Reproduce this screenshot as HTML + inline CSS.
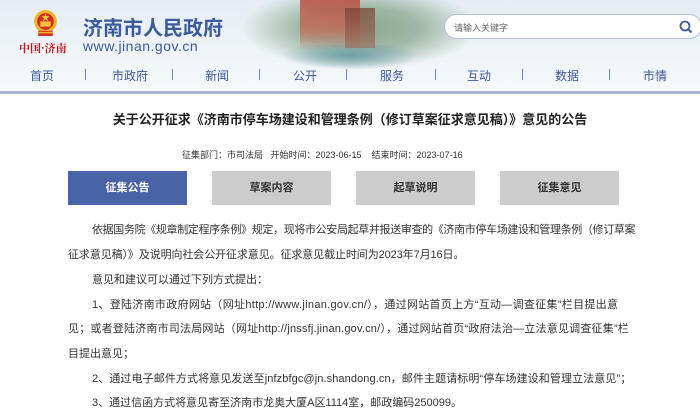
<!DOCTYPE html>
<html><head><meta charset="utf-8">
<style>
*{margin:0;padding:0;box-sizing:border-box}
body{width:700px;height:415px;overflow:hidden;background:#fff;font-family:"Liberation Sans","Noto Sans CJK SC",sans-serif;color:#333;position:relative}
.hdr{position:absolute;left:0;top:0;width:700px;height:91px;background:linear-gradient(180deg,#e4edf3 0%,#eef3f6 50%,#f7f9fb 100%)}
.scene{position:absolute;left:240px;top:0;width:240px;height:70px;background:radial-gradient(ellipse at 50% 40%,#8aa78f 0%,#9fb8a6 35%,rgba(220,230,235,0) 70%)}
.pav{position:absolute;left:300px;top:0;width:60px;height:50px;background:linear-gradient(180deg,#b84a3a,#c46a55 60%,rgba(200,200,200,0));opacity:.8}
.pav2{position:absolute;left:345px;top:8px;width:30px;height:40px;background:linear-gradient(180deg,#7a3d30,#9c7060);opacity:.7}
.water{position:absolute;left:280px;top:45px;width:140px;height:25px;background:radial-gradient(ellipse at 50% 40%,#6f9fa8,rgba(230,238,242,0) 70%)}
.title{position:absolute;left:83px;top:12px;font-size:20px;font-weight:bold;color:#3c5a9c;letter-spacing:0}
.url{position:absolute;left:83px;top:38px;font-size:14px;color:#3c5a9c;letter-spacing:.5px}
.cn{position:absolute;left:19px;top:40px;font-size:11px;color:#c3141b;font-weight:bold;font-family:"Noto Serif CJK SC",serif}
.search{position:absolute;left:444px;top:14px;width:258px;height:25px;border:1px solid #b6c0dc;border-radius:13px;background:#fff}
.search span{position:absolute;left:9px;top:6px;font-size:9px;color:#666}
.nav{position:absolute;top:67px;left:0;width:700px;font-size:12px;color:#3c5a9c}
.nav span{position:absolute;top:0}
.nav i{position:absolute;top:2px;width:1px;height:11px;background:#6f86bd}
.bar{position:absolute;left:0;top:91px;width:700px;height:3px;background:#a9b5d8}
.h1{position:absolute;left:0;width:700px;top:109px;text-align:center;font-size:13px;font-weight:bold;color:#222}
.meta{position:absolute;left:182px;top:148px;font-size:9px;color:#333;white-space:nowrap}
.tab{position:absolute;top:171px;width:119px;height:34px;background:#cccccc;text-align:center;line-height:34px;font-size:11px;font-weight:bold;color:#333}
.tab.on{background:#4863a6;color:#fff}
.p{position:absolute;left:68px;font-size:11px;color:#333;white-space:nowrap}
</style></head><body>
<div class="hdr"></div>
<div class="scene"></div><div class="water"></div><div class="pav"></div><div class="pav2"></div>
<svg style="position:absolute;left:32px;top:9px" width="27" height="28" viewBox="0 0 26 27">
<circle cx="13" cy="12" r="11" fill="#e9b52c"/><circle cx="13" cy="12" r="8" fill="#d42a1e"/>
<rect x="8" y="12" width="10" height="5" fill="#f2c43a"/><polygon points="13,4 14,7 17,7 14.5,9 15.5,12 13,10 10.5,12 11.5,9 9,7 12,7" fill="#f5d03c"/>
<rect x="6" y="21" width="14" height="5" fill="#d42a1e"/><rect x="6" y="22" width="14" height="1.5" fill="#e9b52c"/></svg>
<div class="cn">中国·济南</div>
<div class="title">济南市人民政府</div>
<div class="url">www.jinan.gov.cn</div>
<div class="search"><span>请输入关键字</span>
<svg style="position:absolute;right:8px;top:5px" width="14" height="14" viewBox="0 0 14 14"><circle cx="6" cy="6" r="4.5" fill="none" stroke="#3c5a9c" stroke-width="1.8"/><line x1="9.3" y1="9.3" x2="12.5" y2="12.5" stroke="#3c5a9c" stroke-width="2"/></svg></div>
<div class="nav">
<span style="left:30px">首页</span><i style="left:85px"></i>
<span style="left:112px">市政府</span><i style="left:172px"></i>
<span style="left:205px">新闻</span><i style="left:259px"></i>
<span style="left:293px">公开</span><i style="left:346px"></i>
<span style="left:380px">服务</span><i style="left:435px"></i>
<span style="left:467px">互动</span><i style="left:522px"></i>
<span style="left:555px">数据</span><i style="left:609px"></i>
<span style="left:643px">市情</span>
</div>
<div class="bar"></div>
<div class="h1">关于公开征求《济南市停车场建设和管理条例（修订草案征求意见稿）》意见的公告</div>
<div class="meta">征集部门：市司法局&nbsp;&nbsp;&nbsp;开始时间：2023-06-15&nbsp;&nbsp;&nbsp;&nbsp;结束时间：2023-07-16</div>
<div class="tab on" style="left:68px">征集公告</div>
<div class="tab" style="left:212px">草案内容</div>
<div class="tab" style="left:356px">起草说明</div>
<div class="tab" style="left:500px">征集意见</div>
<div class="p" style="top:221px;left:92px;letter-spacing:-.35px">依据国务院《规章制定程序条例》规定，现将市公安局起草并报送审查的《济南市停车场建设和管理条例（修订草案</div>
<div class="p" style="top:246px;letter-spacing:-.1px">征求意见稿）》及说明向社会公开征求意见。征求意见截止时间为2023年7月16日。</div>
<div class="p" style="top:271px;left:92px">意见和建议可以通过下列方式提出：</div>
<div class="p" style="top:296px;left:92px;letter-spacing:.3px">1、登陆济南市政府网站（网址http://www.jinan.gov.cn/），通过网站首页上方“互动—调查征集”栏目提出意</div>
<div class="p" style="top:320px;letter-spacing:.2px">见；或者登陆济南市司法局网站（网址http://jnssfj.jinan.gov.cn/），通过网站首页“政府法治—立法意见调查征集”栏</div>
<div class="p" style="top:345px">目提出意见；</div>
<div class="p" style="top:370px;left:92px;letter-spacing:.1px">2、通过电子邮件方式将意见发送至jnfzbfgc@jn.shandong.cn，邮件主题请标明“停车场建设和管理立法意见”；</div>
<div class="p" style="top:394px;left:92px">3、通过信函方式将意见寄至济南市龙奥大厦A区1114室，邮政编码250099。</div>
</body></html>
